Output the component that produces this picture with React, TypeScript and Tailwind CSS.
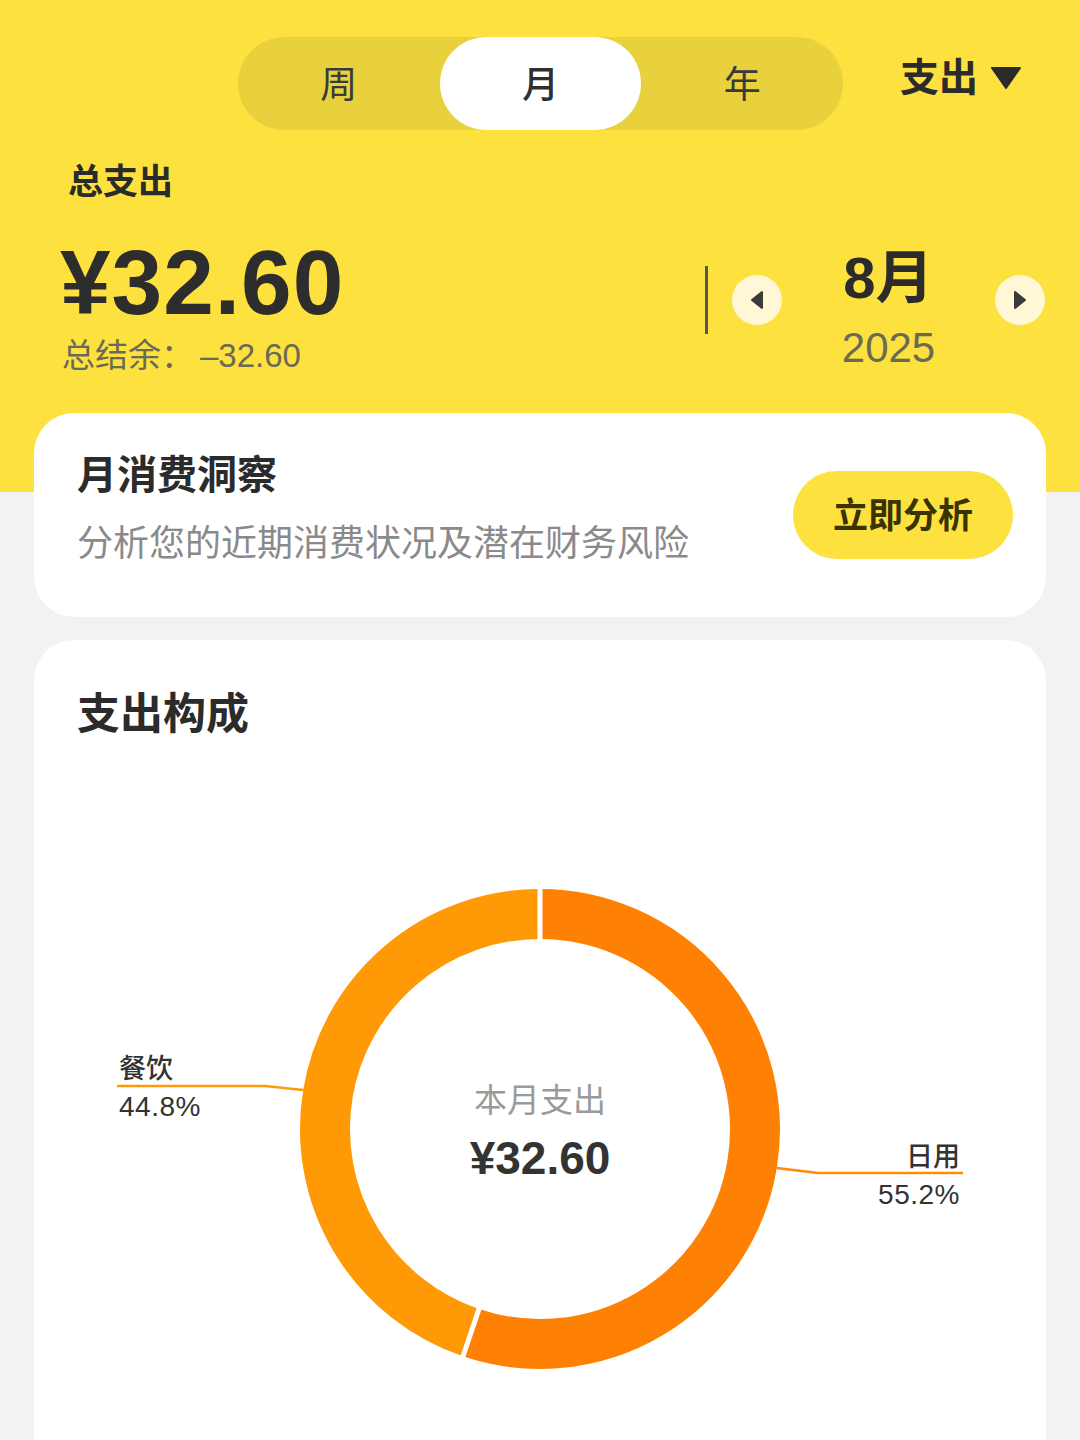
import React from 'react';

const FONT = '"Liberation Sans", "Noto Sans CJK SC", sans-serif';

const tabs = ['周', '月', '年'];

// donut geometry (svg coords, card-relative)
const CX = 506;
const CY = 369;
const R = 215;
const pt = (deg: number, r: number) => {
  const a = (deg * Math.PI) / 180;
  return [CX + r * Math.sin(a), CY - r * Math.cos(a)];
};

const DonutChart: React.FC = () => {
  const split = 0.552 * 360;
  const [sx, sy] = pt(0, R);
  const [ex, ey] = pt(split, R);
  const [g1x, g1y] = pt(0, 188);
  const [g2x, g2y] = pt(0, 242);
  const [g3x, g3y] = pt(split, 188);
  const [g4x, g4y] = pt(split, 242);
  const [lx, ly] = pt(split + (360 - split) / 2, 240);
  const [rx, ry] = pt(split / 2, 240);

  return (
    <svg width="1012" height="680" viewBox="0 0 1012 680" className="block">
      <path d={`M ${sx} ${sy} A ${R} ${R} 0 1 1 ${ex} ${ey}`} fill="none" stroke="#FF8103" strokeWidth="50" />
      <path d={`M ${ex} ${ey} A ${R} ${R} 0 0 1 ${sx} ${sy}`} fill="none" stroke="#FF9A06" strokeWidth="50" />
      <line x1={g1x} y1={g1y} x2={g2x} y2={g2y} stroke="#fff" strokeWidth="5" />
      <line x1={g3x} y1={g3y} x2={g4x} y2={g4y} stroke="#fff" strokeWidth="5" />

      {/* leader lines */}
      <polyline points={`${lx},${ly} 231,326 83,326`} fill="none" stroke="#FF9A06" strokeWidth="2.5" />
      <polyline points={`${rx},${ry} 784,413 929,413`} fill="none" stroke="#FF8A10" strokeWidth="2.5" />

      <g fontFamily={FONT} fill="#333">
        <text x="85" y="318" fontSize="27" fontWeight="500">餐饮</text>
        <text x="85" y="356" fontSize="28" letterSpacing="0.5">44.8%</text>
        <text x="926" y="406" fontSize="27" fontWeight="500" textAnchor="end">日用</text>
        <text x="926" y="444" fontSize="28" letterSpacing="0.5" textAnchor="end">55.2%</text>
        <text x={CX} y="352" fontSize="33" fill="#9a9a9a" textAnchor="middle">本月支出</text>
        <text x={CX} y="414" fontSize="46" fontWeight="700" fill="#333" textAnchor="middle">¥32.60</text>
      </g>
    </svg>
  );
};

const ArrowButton: React.FC<{ dir: 'left' | 'right' }> = ({ dir }) => (
  <div className="w-[50px] h-[50px] rounded-full bg-[#FFF7D6] flex items-center justify-center">
    <svg width="14" height="20" viewBox="0 0 14 20">
      {dir === 'left' ? (
        <path d="M12 2 L2 10 L12 18 Z" fill="#3b3b3b" stroke="#3b3b3b" strokeWidth="2" strokeLinejoin="round" />
      ) : (
        <path d="M2 2 L12 10 L2 18 Z" fill="#3b3b3b" stroke="#3b3b3b" strokeWidth="2" strokeLinejoin="round" />
      )}
    </svg>
  </div>
);

export default function App() {
  return (
    <div className="min-h-screen bg-[#F2F2F2] overflow-hidden text-[#333]" style={{ fontFamily: FONT }}>
      {/* Yellow header */}
      <div className="h-[492px] bg-[#FDE13E] pt-[37px]">
        <div className="flex items-center">
          <div className="ml-[238px] w-[605px] h-[93px] rounded-full bg-[#E8D13C] flex">
            {tabs.map(t => (
              <div
                key={t}
                className={`flex-1 h-full rounded-full flex items-center justify-center text-[37px] leading-none pt-[3px] ${
                  t === '月' ? 'bg-white font-medium text-[#2f2f2f]' : 'text-[#3a3a3a]'
                }`}
              >
                {t}
              </div>
            ))}
          </div>
          <div className="ml-[57px] flex items-center gap-[12px] -mt-[12px]">
            <span className="text-[39px] font-bold leading-none text-[#2b2b2b]">支出</span>
            <svg width="32" height="24" viewBox="0 0 32 24">
              <path d="M2 2 H30 L16 22 Z" fill="#2b2b2b" stroke="#2b2b2b" strokeWidth="2" strokeLinejoin="round" />
            </svg>
          </div>
        </div>

        <div className="flex justify-between mt-[34px]">
          <div className="flex flex-col">
            <div className="pl-[68px] text-[35px] font-bold leading-none text-[#2b2b2b]">总支出</div>
            <div className="pl-[60px] mt-[38px] text-[91px] font-bold leading-none tracking-[1px] text-[#2d2d2d]">¥32.60</div>
            <div className="pl-[62px] mt-[11px] text-[33px] leading-none text-[#6b6a55] flex">
              <span>总结余：</span>
              <span className="ml-[6px]">–32.60</span>
            </div>
          </div>
          <div className="flex items-center mt-[75px] pr-[35px] h-[122px]">
            <div className="w-[3px] h-[68px] bg-[#555] mr-[24px]" />
            <ArrowButton dir="left" />
            <div className="w-[213px] flex flex-col items-center pt-[18px]">
              <div className="text-[58px] font-bold leading-none text-[#2b2b2b]">8月</div>
              <div className="mt-[20px] text-[42px] leading-none text-[#6b6a55]">2025</div>
            </div>
            <ArrowButton dir="right" />
          </div>
        </div>
      </div>

      {/* Cards */}
      <div className="-mt-[79px] px-[34px] flex flex-col gap-[23px]">
        <div className="h-[204px] rounded-[40px] bg-white flex items-center justify-between pl-[43px] pr-[33px]">
          <div className="self-start pt-[42px]">
            <div className="text-[40px] font-bold leading-none text-[#2b2b2b]">月消费洞察</div>
            <div className="mt-[31px] text-[36px] leading-none text-[#8a8a8a]">分析您的近期消费状况及潜在财务风险</div>
          </div>
          <button className="w-[220px] h-[88px] rounded-full bg-[#FDE13E] text-[35px] font-bold text-[#3a3200] leading-none">
            立即分析
          </button>
        </div>

        <div className="h-[900px] rounded-[40px] bg-white pt-[53px]">
          <div className="pl-[43px] text-[43px] font-bold leading-none text-[#2b2b2b]">支出构成</div>
          <div className="mt-[24px]">
            <DonutChart />
          </div>
        </div>
      </div>
    </div>
  );
}
